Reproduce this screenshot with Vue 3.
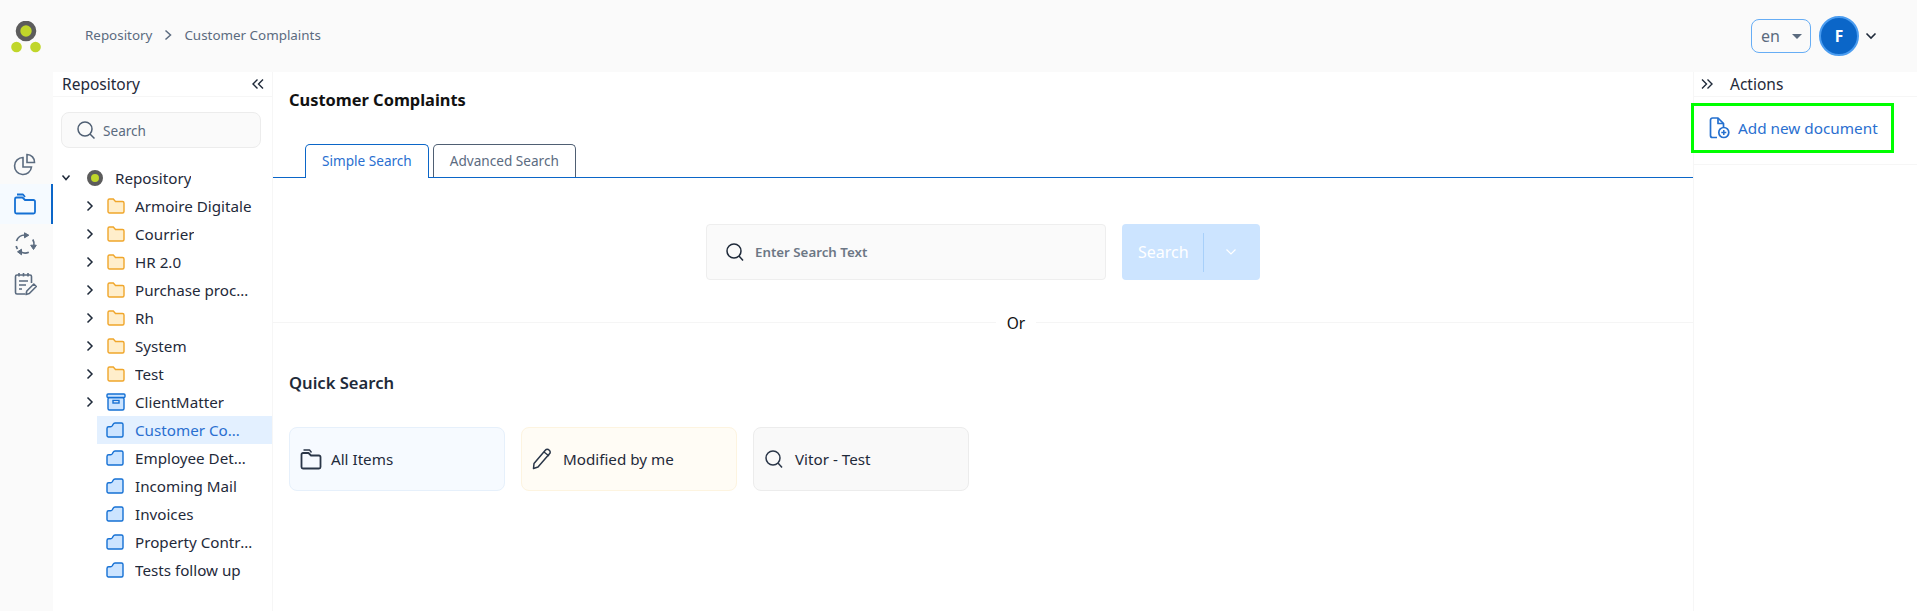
<script setup>
const yellow = ['Armoire Digitale', 'Courrier', 'HR 2.0', 'Purchase process', 'Rh', 'System', 'Test']
const blue = ['Customer Complaints', 'Employee Details', 'Incoming Mail', 'Invoices', 'Property Contracts', 'Tests follow up']
</script>

<template>
  <div class="page">
    <header class="top">
      <svg class="logo" width="30" height="32" viewBox="0 0 30 32">
        <circle cx="15" cy="10" r="8" fill="#c0d62a" stroke="#5c5c5c" stroke-width="4.6" />
        <circle cx="5.5" cy="26" r="5.3" fill="#c0d62a" />
        <circle cx="24.5" cy="26" r="5.3" fill="#c0d62a" />
      </svg>
      <nav class="crumbs">
        <span>Repository</span>
        <svg width="10" height="12" viewBox="0 0 10 12"><path d="M2.500 1.500 7.500 6l-5 4.500" fill="none" stroke="#5b6b7f" stroke-width="1.5" /></svg>
        <span>Customer Complaints</span>
      </nav>
      <div class="lang"><span>en</span><i class="caret"></i></div>
      <div class="avatar">F</div>
      <svg class="avatar-chev" width="12" height="8" viewBox="0 0 12 8"><path d="M1.500 1.500 6 6l4.500-4.500" fill="none" stroke="#1f2a3a" stroke-width="1.6" /></svg>
    </header>

    <div class="body">
      <aside class="rail">
        <div class="rail-item">
          <svg width="24" height="24" viewBox="0 0 24 24" fill="none" stroke="#5b6b7f" stroke-width="1.6">
            <path d="M10 5.500a8.500 8.500 0 1 0 8.500 9.500H10z" />
            <path d="M14 2.500a7.500 7.500 0 0 1 7.500 8H14z" />
          </svg>
        </div>
        <div class="rail-item active">
          <svg width="24" height="24" viewBox="0 0 24 24" fill="none" stroke="#1570d4" stroke-width="1.8" stroke-linejoin="round">
            <path d="M2 9v11a1.500 1.500 0 0 0 1.500 1.500h17A1.500 1.500 0 0 0 22 20V9.500A1.500 1.500 0 0 0 20.500 8H12L9.500 5.500h-6A1.500 1.500 0 0 0 2 7z" />
            <path d="M4 2.500h6l2 2.500" />
          </svg>
        </div>
        <div class="rail-item">
          <svg width="24" height="24" viewBox="0 0 24 24" fill="none" stroke="#5b6b7f" stroke-width="1.7">
            <path d="M3.500 9A9 9 0 0 1 12 3" />
            <path d="M19.800 7.500A9 9 0 0 1 20.900 13.600" />
            <path d="M15.800 20.200A9 9 0 0 1 8 20" />
            <path d="M3.200 14A9 9 0 0 0 4.500 17" />
            <path d="M11.500 .8 15.800 3.200 11.500 5.800z" fill="#5b6b7f" stroke-width="1" />
            <path d="M23.300 13.200 20.500 17.500 17.700 13.200z" fill="#5b6b7f" stroke-width="1" />
            <path d="M8.500 17.200 4.500 19.800 8.500 22.800z" fill="#5b6b7f" stroke-width="1" />
          </svg>
        </div>
        <div class="rail-item">
          <svg width="24" height="24" viewBox="0 0 24 24" fill="none" stroke="#5b6b7f" stroke-width="1.6" stroke-linejoin="round">
            <path d="M12 22H4a1.500 1.500 0 0 1-1.500-1.500v-16A1.500 1.500 0 0 1 4 3h13a1.500 1.500 0 0 1 1.500 1.500V11" />
            <path d="M6 1v3.500M10.500 1v3.500M15 1v3.500M6 9h9M6 13h7M6 17h3" />
            <path d="M13 22.500l.8-3.500 7-7 2.500 2.500-7 7z" />
          </svg>
        </div>
      </aside>

      <aside class="side">
        <div class="side-head">
          <span>Repository</span>
          <svg width="14" height="12" viewBox="0 0 14 12"><path d="M6.500 1.500 2 6l4.500 4.500M12 1.500 7.500 6l4.500 4.500" fill="none" stroke="#1f2a3a" stroke-width="1.4" /></svg>
        </div>
        <div class="side-search">
          <svg width="20" height="20" viewBox="0 0 20 20" fill="none" stroke="#4f5f73" stroke-width="1.5"><circle cx="9" cy="9" r="7" /><path d="m14 14 4.500 4.500" /></svg>
          <span>Search</span>
        </div>
        <ul class="tree">
          <li class="row root">
            <svg class="chev" width="10" height="8" viewBox="0 0 10 8"><path d="M1.500 1.500 5 5.500l3.500-4" fill="none" stroke="#1f2a3a" stroke-width="1.500" /></svg>
            <svg width="18" height="18" viewBox="0 0 18 18"><circle cx="9" cy="9" r="6" fill="#c0d62a" stroke="#5c5c5c" stroke-width="4" /></svg>
            <span class="label">Repository</span>
          </li>
          <li v-for="name in yellow" :key="name" class="row child">
            <svg class="chev" width="8" height="12" viewBox="0 0 8 12"><path d="M1.500 1.500 6 6l-4.500 4.500" fill="none" stroke="#1f2a3a" stroke-width="1.500" /></svg>
            <svg width="18" height="16" viewBox="0 0 18 16"><path d="M1 2.500A1.500 1.500 0 0 1 2.500 1h3.800L8.500 3.500h7A1.500 1.500 0 0 1 17 5v8.500a1.500 1.500 0 0 1-1.500 1.500h-13A1.500 1.500 0 0 1 1 13.500z" fill="#ffeecb" stroke="#f0a62b" stroke-width="1.400" /></svg>
            <span class="label">{{ name }}</span>
          </li>
          <li class="row child">
            <svg class="chev" width="8" height="12" viewBox="0 0 8 12"><path d="M1.500 1.500 6 6l-4.500 4.500" fill="none" stroke="#1f2a3a" stroke-width="1.500" /></svg>
            <svg class="box" width="20" height="18" viewBox="0 0 20 18" stroke="#1570d4" stroke-width="1.400"><rect x="2" y="4.500" width="16" height="12.500" rx="1.500" fill="#cce4ff" /><rect x="1" y="1" width="18" height="3.500" rx="1" fill="#cce4ff" /><rect x="7" y="7.500" width="6" height="2.500" fill="#fff" /></svg>
            <span class="label">ClientMatter</span>
          </li>
          <li v-for="(name, i) in blue" :key="name" class="row leaf" :class="{ selected: i === 0 }">
            <svg width="18" height="16" viewBox="0 0 18 16"><path d="M1 6.500Q1 4.800 2.700 4.800H4.500Q5.800 4.800 6.500 3.500L7.200 2.200Q7.800 1 9 1h6.500A1.500 1.500 0 0 1 17 2.500v11a1.500 1.500 0 0 1-1.500 1.500h-13A1.500 1.500 0 0 1 1 13.500z" fill="#cce4ff" stroke="#1570d4" stroke-width="1.400" stroke-linejoin="round" /></svg>
            <span class="label">{{ name }}</span>
          </li>
        </ul>
      </aside>

      <main class="main">
        <h1 class="title">Customer Complaints</h1>
        <div class="tabs">
          <div class="tab on">Simple Search</div>
          <div class="tab">Advanced Search</div>
        </div>
        <div class="searchbar">
          <div class="search-input">
            <svg width="20" height="20" viewBox="0 0 20 20" fill="none" stroke="#1f2a3a" stroke-width="1.500"><circle cx="9" cy="9" r="7" /><path d="m14 14 4 4.500" /></svg>
            <span>Enter Search Text</span>
          </div>
          <div class="search-btn">
            <span class="btn-text">Search</span>
            <i class="btn-sep"></i>
            <svg width="12" height="8" viewBox="0 0 12 8"><path d="M1.500 1.500 6 6l4.500-4.500" fill="none" stroke="#fff" stroke-width="1.200" /></svg>
          </div>
        </div>
        <div class="or"><span>Or</span></div>
        <h2 class="quick-title">Quick Search</h2>
        <div class="cards">
          <div class="card c-blue">
            <svg width="22" height="22" viewBox="0 0 22 22" fill="none" stroke="#2a3648" stroke-width="1.800" stroke-linejoin="round"><path d="M1.500 8v11a1.500 1.500 0 0 0 1.500 1.500h16a1.500 1.500 0 0 0 1.500-1.500V9A1.500 1.500 0 0 0 19 7.500h-8L8.500 5H3A1.500 1.500 0 0 0 1.500 6.500z" /><path d="M3.500 2h6l2 2.500" stroke-width="1.400" /></svg>
            <span>All Items</span>
          </div>
          <div class="card c-yellow">
            <svg width="20" height="22" viewBox="0 0 20 22" fill="none" stroke="#2a3648" stroke-width="1.500" stroke-linejoin="round"><path d="M1.500 20.500 2 15.500 13.500 2a2.200 2.200 0 0 1 3.500 0l.5.5a2.300 2.300 0 0 1 0 3.300L6 19z" /><path d="M12 4l5 4" /></svg>
            <span>Modified by me</span>
          </div>
          <div class="card c-gray">
            <svg width="20" height="20" viewBox="0 0 20 20" fill="none" stroke="#2a3648" stroke-width="1.500"><circle cx="9" cy="9" r="7" /><path d="m14 14 4 4.500" /></svg>
            <span>Vitor - Test</span>
          </div>
        </div>
      </main>

      <aside class="actions">
        <div class="act-head">
          <svg width="14" height="12" viewBox="0 0 14 12"><path d="M2 1.500 6.500 6 2 10.500M7.500 1.500 12 6l-4.500 4.500" fill="none" stroke="#1f2a3a" stroke-width="1.400" /></svg>
          <span>Actions</span>
        </div>
        <div class="act-row">
          <div class="act-btn">
            <svg width="21" height="22" viewBox="0 0 21 22" fill="none" stroke="#2470cf" stroke-width="1.700" stroke-linejoin="round">
              <path d="M8 20.500H3.500a2 2 0 0 1-2-2V3a2 2 0 0 1 2-2h5.500l5.500 5.500v3.500" />
              <path d="M9 1v5.500h5.500" />
              <circle cx="14.800" cy="15.500" r="5" />
              <path d="M14.800 13v5M12.300 15.500h5" stroke-width="1.500" />
            </svg>
            <span>Add new document</span>
          </div>
        </div>
      </aside>
    </div>
  </div>
</template>

<style>
html, body { margin: 0; background: #fff; }
</style>

<style scoped>
* { box-sizing: border-box; }
.page {
  width: 1917px;
  height: 611px;
  overflow: hidden;
  display: flex;
  flex-direction: column;
  background: #fafafa;
  font-family: "Noto Sans", "Open Sans", sans-serif;
  color: #1f2a3a;
}
.top {
  height: 72px;
  flex: none;
  display: flex;
  align-items: center;
  padding: 0 40px 0 11px;
}
.logo { margin-top: 2px; }
.crumbs {
  display: flex;
  align-items: center;
  gap: 11px;
  margin: -2px 0 0 44px;
  font-size: 13.4px;
  color: #5b6b7f;
  flex: 1;
}
.lang {
  width: 60px;
  height: 34px;
  border: 1px solid #66adf5;
  border-radius: 8px;
  display: flex;
  align-items: center;
  justify-content: space-between;
  padding: 0 8px 0 9px;
  color: #5b6b7f;
  font-size: 16px;
}
.caret {
  width: 0;
  height: 0;
  border-left: 5px solid transparent;
  border-right: 5px solid transparent;
  border-top: 5px solid #5b6b7f;
}
.avatar {
  width: 40px;
  height: 40px;
  margin-left: 8px;
  border-radius: 50%;
  background: #0b66c8;
  border: 2px solid #4a9cf0;
  color: #fff;
  font-size: 15.5px;
  font-weight: 700;
  display: flex;
  align-items: center;
  justify-content: center;
}
.avatar-chev { margin-left: 6px; }
.body { flex: 1; display: flex; min-height: 0; }

.rail {
  width: 53px;
  flex: none;
  padding-top: 72px;
  display: flex;
  flex-direction: column;
}
.rail-item {
  height: 40px;
  display: flex;
  align-items: center;
  justify-content: center;
  padding-right: 3px;
}
.rail-item.active {
  background: #f5faff;
  border-right: 2px solid #0b66c8;
  padding-right: 1px;
}

.side {
  width: 220px;
  flex: none;
  background: #fff;
  border-right: 1px solid #f6f6f6;
}
.side-head {
  height: 25px;
  border-bottom: 1px solid #f6f6f6;
  display: flex;
  align-items: center;
  justify-content: space-between;
  padding: 0 7px 0 9px;
  font-size: 15.5px;
}
.side-search {
  margin: 15px 11px 0 8px;
  height: 36px;
  border: 1px solid #ececec;
  border-radius: 8px;
  background: #fafafa;
  display: flex;
  align-items: center;
  gap: 7px;
  padding: 0 14px;
  font-size: 13.6px;
  color: #5b6b7f;
}
.tree { list-style: none; margin: 16px 0 0; padding: 0; font-size: 15.2px; }
.row { height: 28px; display: flex; align-items: center; }
.root { padding-left: 8px; }
.root .chev { margin-right: 15px; }
.root .label { margin-left: 11px; }
.child { padding-left: 33px; }
.child .chev { margin-right: 13px; }
.child .label { margin-left: 10px; }
.child .box { margin-left: -1px; }
.child .box + .label { margin-left: 9px; }
.leaf { padding-left: 53px; }
.leaf .label { margin-left: 11px; }
.selected {
  background: #e3f0ff;
  margin-left: 44px;
  padding-left: 9px;
  color: #2a6fd0;
}
.label {
  max-width: 118px;
  white-space: nowrap;
  overflow: hidden;
  text-overflow: ellipsis;
}

.main {
  flex: 1;
  min-width: 0;
  background: #fff;
  display: flex;
  flex-direction: column;
}
.title {
  margin: 16px 0 0 16px;
  font-size: 16.4px;
  line-height: 24px;
  font-weight: 700;
  color: #111;
}
.tabs {
  margin-top: 32px;
  height: 33px;
  border-bottom: 1px solid #0b66c8;
  padding-left: 32px;
  display: flex;
  gap: 4px;
  box-sizing: content-box;
}
.tab {
  height: 33px;
  padding: 0 16px 2px;
  border: 1px solid #4f5f73;
  border-bottom: 0;
  border-radius: 5px 5px 0 0;
  font-size: 13.6px;
  color: #5b6b7f;
  display: flex;
  align-items: center;
}
.tab.on {
  height: 34px;
  padding-bottom: 3px;
  border-color: #0b66c8;
  color: #2a6fd0;
  background: #fff;
}
.searchbar {
  margin-top: 46px;
  display: flex;
  justify-content: center;
  gap: 16px;
}
.search-input {
  width: 400px;
  height: 56px;
  border: 1px solid #eeeeee;
  border-radius: 4px;
  background: #fafafa;
  display: flex;
  align-items: center;
  gap: 10px;
  padding: 0 18px;
  font-size: 13.3px;
  font-weight: 600;
  color: #6c7785;
}
.search-btn {
  width: 138px;
  height: 56px;
  border-radius: 4px;
  background: #cce4ff;
  display: flex;
  align-items: center;
  padding-left: 16px;
  color: #fff;
  font-size: 16px;
}
.btn-text { width: 65px; }
.btn-sep { width: 1px; height: 39px; background: #a8d0fa; margin-right: 21px; }
.or {
  margin-top: 42px;
  height: 1px;
  background: #f5f5f5;
  display: flex;
  align-items: center;
  justify-content: center;
  font-size: 15.5px;
  color: #111;
  padding-left: 66px;
}
.or span { background: #fff; padding: 0 11px; }
.quick-title {
  margin: 48px 0 0 16px;
  font-size: 16.6px;
  line-height: 24px;
  font-weight: 600;
  color: #1f2a3a;
}
.cards { margin: 32px 0 0 16px; display: flex; gap: 16px; }
.card {
  width: 216px;
  height: 64px;
  border-radius: 8px;
  border: 1px solid;
  display: flex;
  align-items: center;
  gap: 9px;
  padding: 0 0 1px 10px;
  font-size: 15.2px;
}
.c-yellow { gap: 11px; }
.c-gray { gap: 11px; }
.c-blue { background: #f6faff; border-color: #e6f0fb; }
.c-yellow { background: #fffcf5; border-color: #fdf4e0; }
.c-gray { background: #f9f9f9; border-color: #ececec; }

.actions {
  width: 224px;
  flex: none;
  background: #fff;
  border-left: 1px solid #f6f6f6;
}
.act-head {
  height: 25px;
  border-bottom: 1px solid #f6f6f6;
  display: flex;
  align-items: center;
  gap: 16px;
  padding-left: 6px;
  font-size: 15.5px;
}
.act-row {
  height: 68px;
  border-bottom: 1px solid #f6f6f6;
  padding-top: 6px;
}
.act-btn {
  margin-left: -3px;
  width: 203px;
  height: 50px;
  border: 3px solid #00ff00;
  display: flex;
  align-items: center;
  gap: 8px;
  padding-left: 15px;
  color: #2a6fd0;
  font-size: 15.3px;
  white-space: nowrap;
}
</style>
